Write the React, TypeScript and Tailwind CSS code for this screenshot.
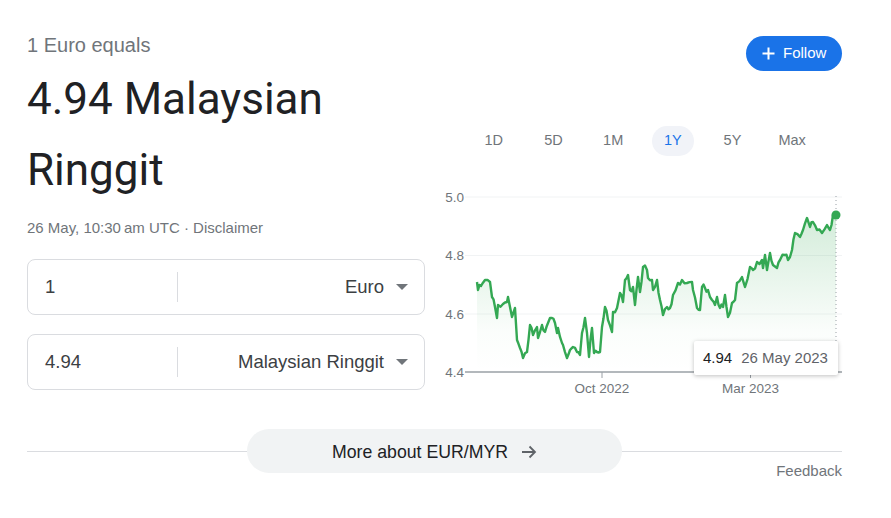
import React from 'react';

// traced from the 1Y EUR/MYR chart, page coordinates
const KEY: [number, number][] = [
  [477, 282], [478, 290], [481, 286], [485, 280], [490, 282], [492, 297], [495, 307], [497, 318],
  [498, 305], [503, 304], [507, 302], [508, 297], [512, 317], [515, 308], [517, 340], [520, 348],
  [523, 358], [527, 352], [530, 325], [533, 335], [537, 327], [538, 338], [542, 325], [545, 332],
  [548, 323], [552, 318], [555, 323], [557, 333], [558, 328], [562, 343], [563, 345], [567, 358],
  [570, 350], [573, 347], [577, 352], [580, 355], [582, 333], [585, 318], [587, 333], [589, 357],
  [592, 328], [594, 353], [597, 352], [600, 352], [602, 327], [605, 307], [608, 320], [612, 332],
  [613, 312], [617, 308], [620, 293], [623, 302], [625, 280], [628, 275], [630, 290], [633, 287],
  [635, 305], [638, 277], [640, 292], [643, 267], [647, 270], [648, 278], [652, 280], [653, 290],
  [657, 280], [660, 300], [663, 315], [667, 307], [670, 308], [673, 295], [678, 283], [682, 280],
  [687, 283], [692, 282], [693, 290], [697, 308], [700, 310], [702, 287], [705, 288], [708, 290],
  [712, 300], [715, 305], [717, 297], [720, 308], [723, 307], [725, 295], [728, 317], [732, 303],
  [735, 300], [737, 283], [742, 277], [745, 287], [750, 267], [753, 270], [757, 262], [762, 260],
  [763, 268], [765, 255], [767, 270], [770, 253], [773, 265], [777, 268], [780, 260], [785, 255],
  [788, 260], [792, 250], [795, 233], [800, 237], [803, 230], [807, 218], [810, 227], [813, 222],
  [817, 230], [822, 233], [827, 225], [830, 230], [833, 215], [836, 215],
];

function buildPoints() {
  let seed = 11;
  const rnd = () => {
    seed = (seed * 16807) % 2147483647;
    return seed / 2147483647;
  };
  const pts: [number, number][] = [];
  for (let i = 0; i < KEY.length - 1; i++) {
    const [x1, y1] = KEY[i];
    const [x2, y2] = KEY[i + 1];
    pts.push([x1, y1]);
    if (x2 - x1 >= 3) {
      pts.push([(x1 + x2) / 2, (y1 + y2) / 2 + (rnd() - 0.5) * 6]);
    }
  }
  pts.push(KEY[KEY.length - 1]);
  return pts;
}

const POINTS = buildPoints();
const LINE = POINTS.map(([x, y], i) => `${i ? 'L' : 'M'}${x.toFixed(1)} ${y.toFixed(1)}`).join(' ');
const AREA = `${LINE} L836 372 L477 372 Z`;

const tabs = ['1D', '5D', '1M', '1Y', '5Y', 'Max'];

const Caret = () => (
  <svg width="12" height="6" viewBox="0 0 12 6" className="ml-[12px]">
    <path d="M0 0 L12 0 L6 6 Z" fill="#70757a" />
  </svg>
);

const CurrencyBox: React.FC<{ amount: string; currency: string }> = ({ amount, currency }) => (
  <div className="h-[56px] flex items-center border border-[#dadce0] rounded-lg">
    <div className="w-[149px] pl-[17px] text-[18.5px] text-[#3c4043]">{amount}</div>
    <div className="w-px h-[30px] bg-[#dadce0]" />
    <div className="flex-1 flex items-center justify-end pr-[16px] text-[18.5px] text-[#3c4043]">
      {currency}
      <Caret />
    </div>
  </div>
);

const Chart = () => (
  <div className="relative mt-[24px] h-[225px]">
    <svg width="417" height="225" viewBox="425 180 417 225" className="block">
      <defs>
        <linearGradient id="fillGrad" x1="0" y1="0" x2="0" y2="1">
          <stop offset="0%" stopColor="#34a853" stopOpacity="0.22" />
          <stop offset="75%" stopColor="#34a853" stopOpacity="0.02" />
          <stop offset="100%" stopColor="#34a853" stopOpacity="0" />
        </linearGradient>
      </defs>
      {[197, 255.5, 314].map((y) => (
        <line key={y} x1="465" x2="842" y1={y} y2={y} stroke="#f1f3f4" strokeWidth="1" />
      ))}
      <g fontFamily="'Liberation Sans', Arial, sans-serif" fontSize="13.5" fill="#70757a" textAnchor="end">
        <text x="464" y="201.5">5.0</text>
        <text x="464" y="260">4.8</text>
        <text x="464" y="318.5">4.6</text>
        <text x="464" y="376.5">4.4</text>
      </g>
      <path d={AREA} fill="url(#fillGrad)" />
      <line x1="836" x2="836" y1="196" y2="372" stroke="#9aa0a6" strokeWidth="1" strokeDasharray="1 3" />
      <line x1="465" x2="842" y1="372" y2="372" stroke="#9aa0a6" strokeWidth="1.5" />
      <line x1="602" x2="602" y1="372" y2="378" stroke="#9aa0a6" strokeWidth="1" />
      <line x1="750.5" x2="750.5" y1="372" y2="378" stroke="#9aa0a6" strokeWidth="1" />
      <g fontFamily="'Liberation Sans', Arial, sans-serif" fontSize="13.5" fill="#70757a" textAnchor="middle">
        <text x="602" y="393">Oct 2022</text>
        <text x="750.5" y="393">Mar 2023</text>
      </g>
      <path d={LINE} fill="none" stroke="#34a853" strokeWidth="2.4" strokeLinejoin="round" />
      <circle cx="836" cy="215" r="4.5" fill="#34a853" />
    </svg>
    <div className="absolute left-[269px] top-[161px] w-[144px] h-[34px] bg-white rounded-[2px] shadow-[0_1px_4px_rgba(0,0,0,0.25)] flex items-center pl-[9px] gap-[9px] text-[15px]">
      <span className="text-[#202124]">4.94</span>
      <span className="text-[#5f6368]">26 May 2023</span>
    </div>
  </div>
);

export default function App() {
  return (
    <div className="w-[891px] h-[518px] bg-white pl-[27px] pr-[49px] pt-[33px] font-['Liberation_Sans',Arial,sans-serif]">
      <div className="flex items-start">
        <div className="w-[398px]">
          <div className="text-[20px] leading-[24px] text-[#70757a]">1 Euro equals</div>
          <div className="mt-[7px] text-[44px] leading-[71px] text-[#202124] font-['Roboto',sans-serif]">
            4.94 Malaysian Ringgit
          </div>
          <div className="mt-[12px] text-[15px] leading-[20px] text-[#70757a]">
            26 May, 10:30&#8201;am UTC · Disclaimer
          </div>
          <div className="mt-[21px]">
            <CurrencyBox amount="1" currency="Euro" />
          </div>
          <div className="mt-[19px]">
            <CurrencyBox amount="4.94" currency="Malaysian Ringgit" />
          </div>
        </div>
        <div className="flex-1">
          <div className="flex justify-end mt-[3px]">
            <button className="h-[35px] w-[96px] rounded-full bg-[#1a73e8] text-white text-[15px] flex items-center pl-[16px] gap-[8px]">
              <svg width="13" height="13" viewBox="0 0 13 13">
                <path d="M6.5 0.5 V12.5 M0.5 6.5 H12.5" stroke="white" strokeWidth="2" />
              </svg>
              Follow
            </button>
          </div>
          <div className="mt-[55px] ml-[39px] grid grid-cols-6 w-[358px] text-[14.5px] text-[#70757a]">
            {tabs.map((t) => (
              <div key={t} className="flex justify-center">
                <div
                  className={`h-[30px] flex items-center justify-center rounded-full ${
                    t === '1Y' ? 'w-[42px] bg-[#f1f3f8] text-[#1a73e8]' : 'px-[10px]'
                  }`}
                >
                  {t}
                </div>
              </div>
            ))}
          </div>
          <Chart />
        </div>
      </div>
      <div className="mt-[24px] flex items-center">
        <div className="flex-1 h-px bg-[#dadce0]" />
        <button className="w-[375px] h-[44px] pt-[2px] rounded-full bg-[#f1f3f4] flex items-center justify-center gap-[13px] text-[17.7px] text-[#202124]">
          More about EUR/MYR
          <svg width="16" height="16" viewBox="0 0 16 16">
            <path d="M1 8 H14 M8.5 2.5 L14 8 L8.5 13.5" stroke="#5f6368" strokeWidth="1.8" fill="none" />
          </svg>
        </button>
        <div className="flex-1 h-px bg-[#dadce0]" />
      </div>
      <div className="-mt-[12px] flex justify-end text-[15px] leading-[20px] text-[#70757a]">Feedback</div>
    </div>
  );
}
